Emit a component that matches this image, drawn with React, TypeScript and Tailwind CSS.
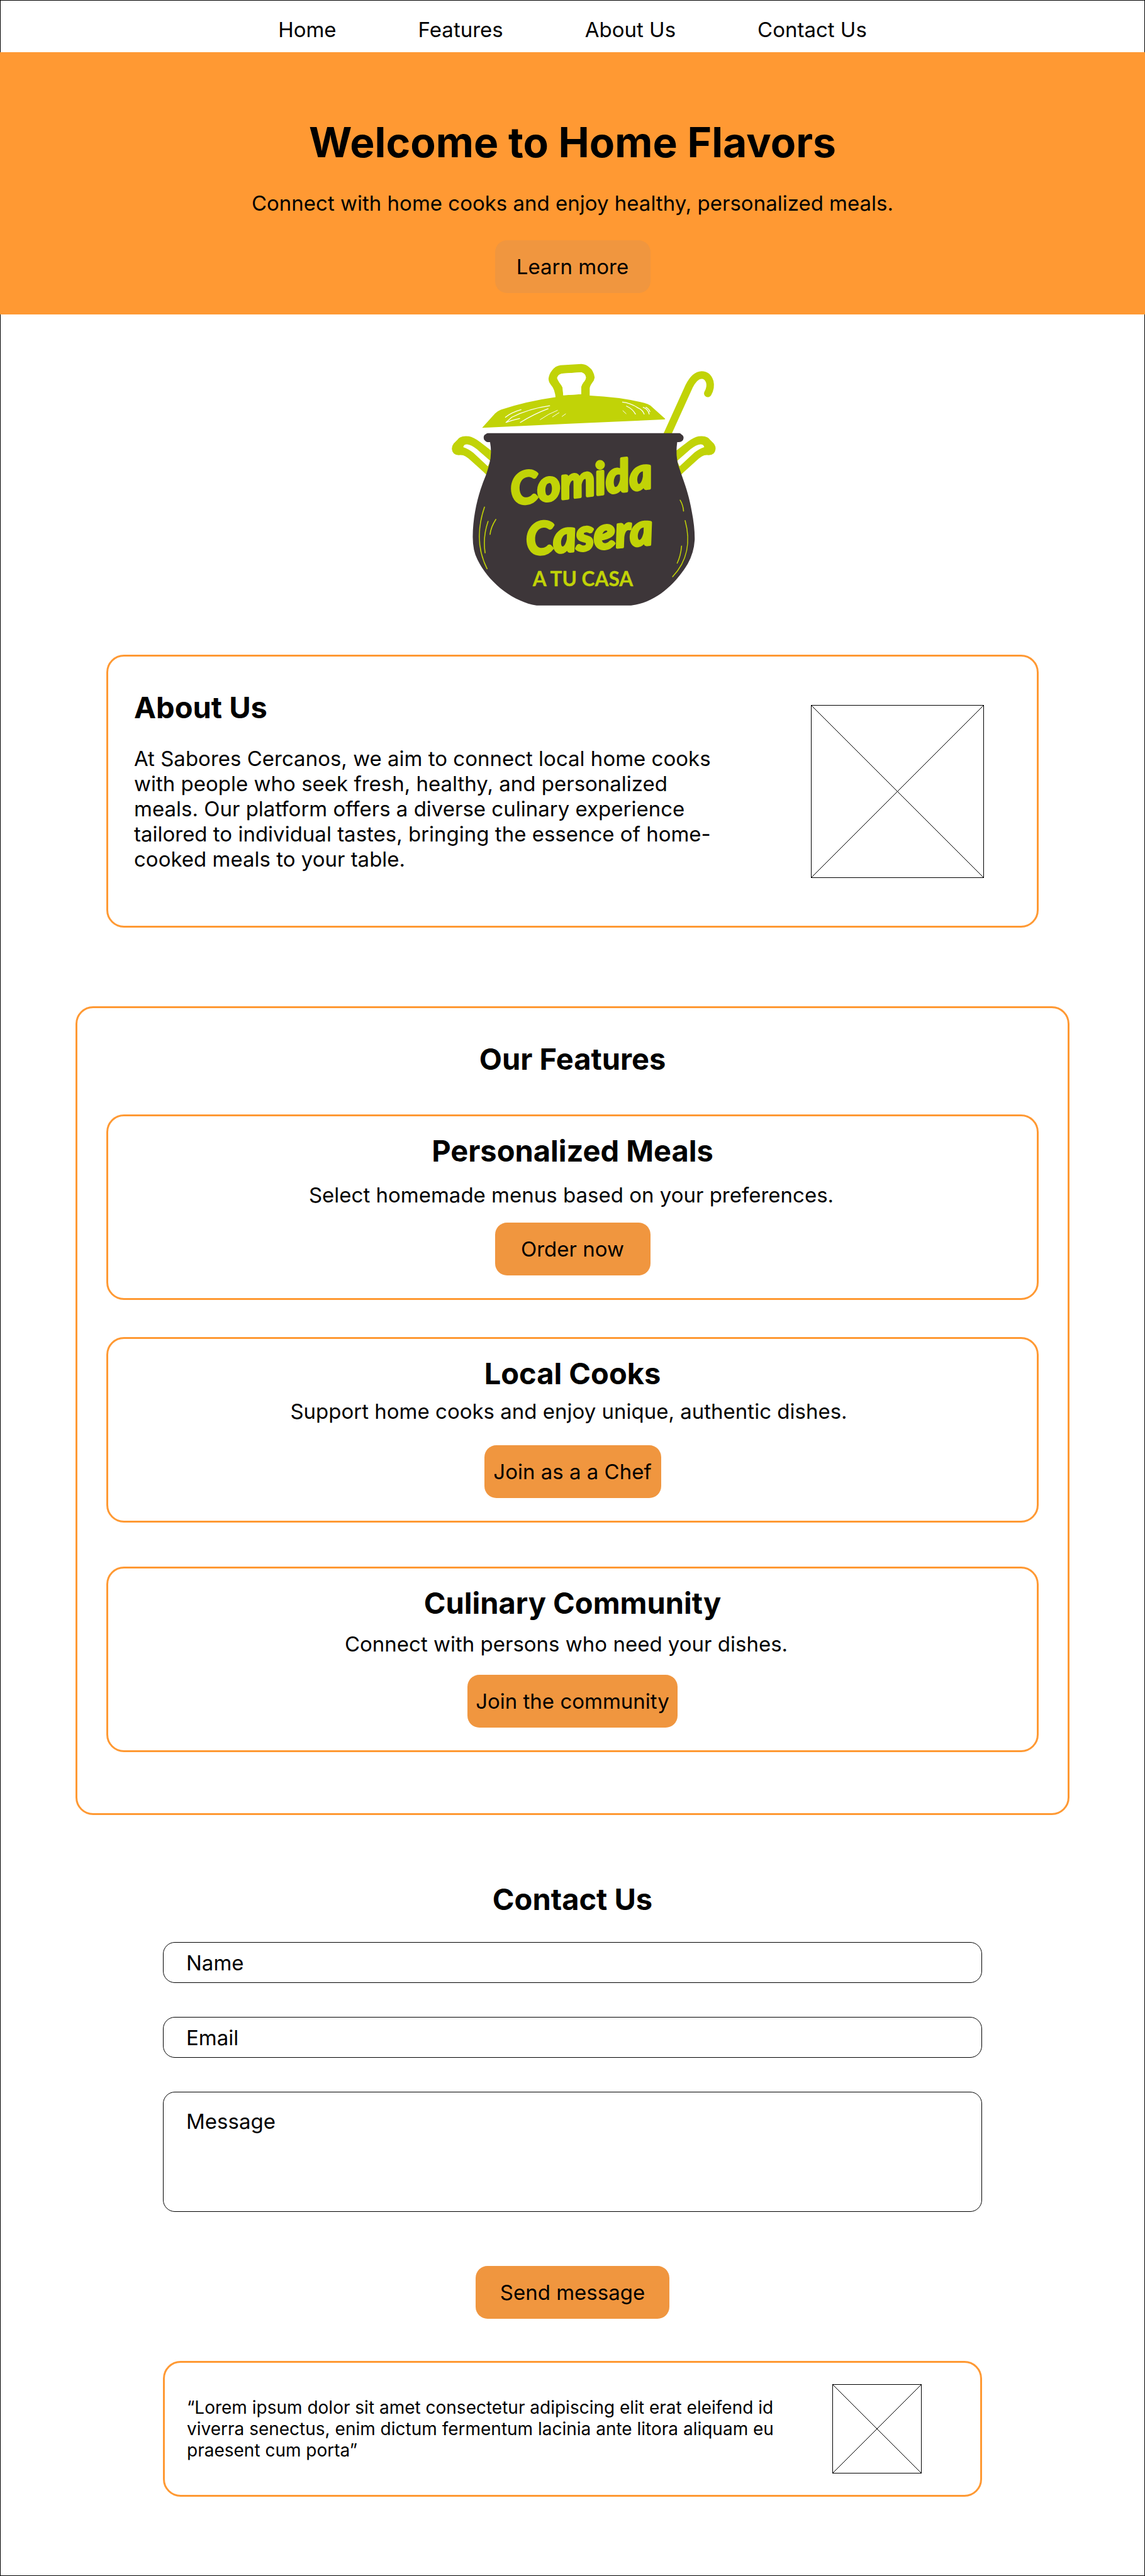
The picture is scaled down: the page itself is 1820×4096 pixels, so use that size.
import type { ReactNode } from "react";

const navLinks = [
  { label: "Home", href: "#home" },
  { label: "Features", href: "#features" },
  { label: "About Us", href: "#about" },
  { label: "Contact Us", href: "#contact" },
];

const features = [
  {
    title: "Personalized Meals",
    text: "Select homemade menus based on your preferences.",
    textClass: "mt-[22px] mb-6 pr-1",
    action: "Order now",
    actionClass: "w-[247px]",
    cardClass: "mt-[60px]",
  },
  {
    title: "Local Cooks",
    text: "Support home cooks and enjoy unique, authentic dishes.",
    textClass: "mt-3 mb-[34px] pr-3",
    action: "Join as a a Chef",
    actionClass: "w-[281px]",
    cardClass: "mt-[59px]",
  },
  {
    title: "Culinary Community",
    text: "Connect with persons who need your dishes.",
    textClass: "mt-[17px] mb-[29px] pr-5",
    action: "Join the community",
    actionClass: "w-[334px]",
    cardClass: "mt-[70px]",
  },
];

function Button({
  children,
  className,
  type = "button",
}: {
  children: ReactNode;
  className: string;
  type?: "button" | "submit";
}) {
  return (
    <button
      type={type}
      className={`h-[84px] rounded-[19px] bg-[#f0963f] text-center whitespace-nowrap ${className}`}
    >
      {children}
    </button>
  );
}

function SectionTitle({ children }: { children: ReactNode }) {
  return <h2 className="text-[47px] leading-[57px] font-bold">{children}</h2>;
}

function ImagePlaceholder({ className }: { className: string }) {
  return (
    <svg
      viewBox="0 0 100 100"
      className={`shrink-0 border border-black ${className}`}
      role="img"
      aria-label="Image placeholder"
    >
      <path
        d="M0 0L100 100M100 0L0 100"
        stroke="#000"
        strokeWidth="1"
        vectorEffect="non-scaling-stroke"
        fill="none"
      />
    </svg>
  );
}

function PotHandle() {
  return (
    <path
      fillRule="evenodd"
      d="M312 526L252 480Q222 458 200 454Q172 450 155 459Q148 463 142 471L123 490Q113 503 114 518Q117 548 148 549Q168 546 183 555Q195 562 212 578L275 635L290 650L330 600ZM308 578L240 519Q212 496 190 494Q174 494 171 508Q196 515 222 537L295 605Z"
    />
  );
}

function Logo() {
  return (
    <svg
      viewBox="110 85 1335 1220"
      className="h-[386px] w-[422px]"
      role="img"
      aria-label="Comida Casera a tu casa"
    >
      <g fill="#c1d307">
        <path d="M266 411L331 339Q341 328 360 320Q490 277 640 256Q720 245 808 249Q960 256 1082 286Q1100 290 1112 299L1187 366Q1186 369 1180 369L720 390Z" />
        <path
          fillRule="evenodd"
          d="M636 262Q634 240 628 222Q622 206 610 192Q600 180 600 163Q603 140 617 123Q634 99 660 96L765 90Q787 91 803 105Q827 122 832 158Q830 172 820 184Q808 200 807 212V256ZM674 247L764 242V206Q766 196 776 182Q788 168 788 157Q786 139 765 132L668 138Q648 142 643 160Q646 170 655 184Q668 200 671 210Z"
        />
        {/* opening under the knob, above the lid */}
        <path
          fill="#fff"
          d="M674 247L764 242V206Q766 196 776 182Q788 168 788 157Q786 139 765 132L668 138Q648 142 643 160Q646 170 655 184Q668 200 671 210Z"
        />
        <PotHandle />
        <g transform="translate(1554 0) scale(-1 1)">
          <PotHandle />
        </g>
      </g>
      <path
        d="M1190 460L1307 202Q1335 146 1370 145Q1400 145 1411 180Q1418 208 1401 238"
        fill="none"
        stroke="#c1d307"
        strokeWidth="38"
        strokeLinecap="round"
      />
      <path
        fill="#3d3639"
        d="M295 438H1258Q1266 439 1268 444Q1280 450 1279 463Q1278 474 1270 478Q1264 483 1247 483Q1238 550 1253 600C1275 670 1303 730 1320 830Q1336 910 1335 975Q1331 1040 1300 1095C1240 1195 1140 1290 1015 1305H540C420 1285 300 1190 243 1075Q219 1030 219 960C220 850 245 750 277 670Q290 640 301 598Q317 545 306 483H293Q286 482 281 476Q273 471 274 458Q275 446 285 443Q288 438 295 438Z"
      />
      <g fill="none" stroke="#fff" strokeWidth="4" strokeLinecap="round">
        <path d="M383 358Q415 333 462 320M386 384L415 358Q500 315 606 300M386 384Q420 372 455 364M458 384Q530 340 598 315" />
        <path
          strokeWidth="3"
          d="M558 370Q600 340 645 323M620 356L653 335M668 354L686 341M974 325L990 340"
        />
        <path d="M972 282Q1012 286 1050 311Q1072 320 1081 342M992 302Q1023 316 1037 342M1076 308Q1102 318 1106 342M1090 308Q1105 316 1110 330" />
      </g>
      <g fill="none" stroke="#c1d307" strokeWidth="5" strokeLinecap="round">
        <path d="M278 810Q220 980 291 1120M296 882Q269 960 281 1040M335 872Q310 910 306 947" />
        <path d="M1262 775Q1277 800 1279 830M1287 878C1315 980 1300 1080 1224 1160M1269 1006Q1265 1055 1247 1092" />
      </g>
      <g
        fill="#c1d307"
        stroke="#c1d307"
        strokeLinejoin="round"
        textAnchor="middle"
        fontFamily="Lato, sans-serif"
        fontWeight="700"
      >
        <g fontStyle="italic" fontSize="222" strokeWidth="14">
          <text x="774" y="756" transform="rotate(-7 774 756)">
            Comida
          </text>
          <text x="812" y="1024" transform="rotate(-5 812 1024)">
            Casera
          </text>
        </g>
        <text x="773" y="1208" fontSize="100" strokeWidth="1">
          A TU CASA
        </text>
      </g>
    </svg>
  );
}

const fieldClass =
  "block w-full rounded-[19px] border border-black bg-white px-9 text-black placeholder:text-black placeholder:opacity-100";

export default function App() {
  return (
    <div
      id="home"
      className="min-h-screen border border-black bg-white font-['Inter',sans-serif] text-[33px] leading-10 text-black"
    >
      <header>
        <nav className="flex flex-wrap justify-center gap-[130px] pt-[26px] pb-4">
          {navLinks.map((link) => (
            <a key={link.label} href={link.href}>
              {link.label}
            </a>
          ))}
        </nav>
      </header>

      <section className="-mx-px flex flex-col items-center bg-[#ff9933] pt-[103px] pb-[34px] text-center">
        <h1 className="text-[66px] leading-[80px] font-bold">Welcome to Home Flavors</h1>
        <p className="mt-[37px] mb-[39px]">
          Connect with home cooks and enjoy healthy, personalized meals.
        </p>
        <Button className="w-[247px]">Learn more</Button>
      </section>

      <main className="flex flex-col items-center">
        <div className="mt-[77px] pl-9">
          <Logo />
        </div>

        <section
          id="about"
          className="mt-[78px] flex w-full max-w-[1482px] items-center justify-between rounded-[28px] border-3 border-[#ff9933] pr-[84px] pl-[41px]"
        >
          <div className="max-w-[950px] pt-[52px] pb-[86px]">
            <SectionTitle>About Us</SectionTitle>
            <p className="mt-[33px]">
              At Sabores Cercanos, we aim to connect local home cooks with people who seek fresh,
              healthy, and personalized meals. Our platform offers a diverse culinary experience
              tailored to individual tastes, bringing the essence of home-cooked meals to your
              table.
            </p>
          </div>
          <ImagePlaceholder className="size-[275px]" />
        </section>

        <section
          id="features"
          className="mt-[125px] flex w-full max-w-[1580px] flex-col items-center rounded-[28px] border-3 border-[#ff9933] px-[46px] pt-[52px] pb-[97px] text-center"
        >
          <SectionTitle>Our Features</SectionTitle>
          {features.map((feature) => (
            <article
              key={feature.title}
              className={`flex w-full flex-col items-center rounded-[28px] border-3 border-[#ff9933] pt-[26px] pb-9 ${feature.cardClass}`}
            >
              <SectionTitle>{feature.title}</SectionTitle>
              <p className={feature.textClass}>{feature.text}</p>
              <Button className={feature.actionClass}>{feature.action}</Button>
            </article>
          ))}
        </section>

        <section
          id="contact"
          className="mt-[105px] flex w-full max-w-[1302px] flex-col items-center"
        >
          <SectionTitle>Contact Us</SectionTitle>
          <form
            className="mt-10 flex w-full flex-col items-center"
            onSubmit={(event) => event.preventDefault()}
          >
            <div className="flex w-full flex-col gap-[54px]">
              <input
                type="text"
                name="name"
                aria-label="Name"
                placeholder="Name"
                className={`h-[65px] ${fieldClass}`}
              />
              <input
                type="email"
                name="email"
                aria-label="Email"
                placeholder="Email"
                className={`h-[65px] ${fieldClass}`}
              />
              <textarea
                name="message"
                aria-label="Message"
                placeholder="Message"
                className={`h-[191px] resize-none pt-[26px] ${fieldClass}`}
              />
            </div>
            <Button type="submit" className="mt-[86px] w-[308px]">
              Send message
            </Button>
          </form>
        </section>

        <section className="mt-[67px] mb-[125px] flex w-full max-w-[1302px] items-center justify-between rounded-[28px] border-3 border-[#ff9933] py-[34px] pr-[93px] pl-[35px]">
          <blockquote className="max-w-[970px] text-[28px] leading-[34px]">
            “Lorem ipsum dolor sit amet consectetur adipiscing elit erat eleifend id viverra
            senectus, enim dictum fermentum lacinia ante litora aliquam eu praesent cum porta”
          </blockquote>
          <ImagePlaceholder className="size-[142px]" />
        </section>
      </main>
    </div>
  );
}
